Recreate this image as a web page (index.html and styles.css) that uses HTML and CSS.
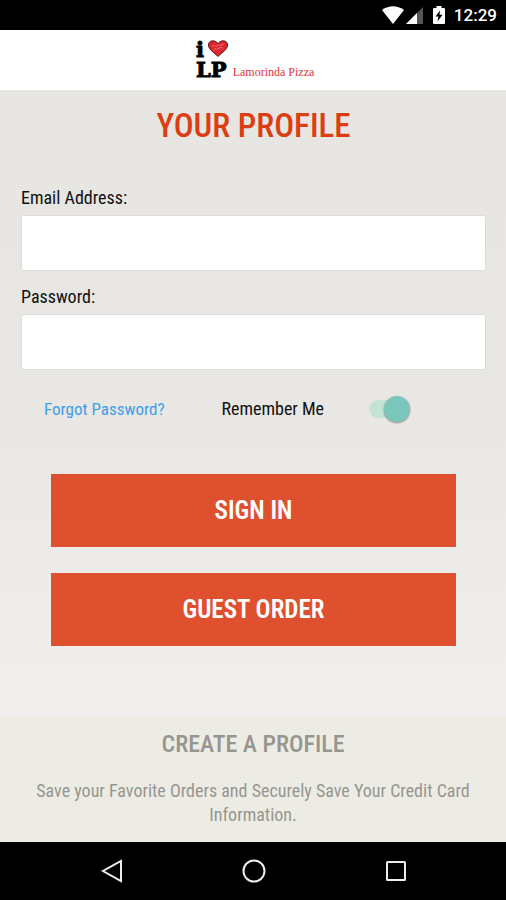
FILE: index.html
```html
<!DOCTYPE html>
<html lang="en">
<head>
<meta charset="utf-8">
<meta name="viewport" content="width=device-width, initial-scale=1">
<title>Lamorinda Pizza</title>
<link rel="stylesheet" href="styles.css">
</head>
<body>
<div class="status">
  <svg width="42" height="20" viewBox="0 0 42 20" aria-hidden="true">
    <path fill="#fff" d="M0 5Q11-2.500 22 5L11 19Z"/>
    <path fill="#555" d="M41 2V19H24Z"/>
    <path fill="#fff" d="M35 8V19H24Z"/>
  </svg>
  <svg width="12" height="20" viewBox="0 0 12 20" aria-hidden="true">
    <path fill="#fff" d="M3.500 1H8.500V3H11Q12 3 12 4V18Q12 19 11 19H1Q0 19 0 18V4Q0 3 1 3H3.500Z"/>
    <path d="M7 5.500 2.500 11.500H5.500L4.500 16.500 9.500 9.800H6.500Z"/>
  </svg>
  <span class="clock">12:29</span>
</div>
<header class="brand">
  <svg class="mark" width="32" height="40" viewBox="0 0 32 40" aria-hidden="true">
    <text class="mark-text" x="0" y="18">i</text>
    <text class="mark-text" x="0" y="38">LP</text>
    <path fill="#df252d" stroke="#481416" d="M22 17.500C19 14 12.500 11 12.500 6C12.500 1 19 .5 22 4.500C25 .5 31.500 1 31.500 6C31.500 11 25 14 22 17.500Z"/>
    <path fill="none" stroke="#f0807c" stroke-width=".8" d="M16 7.500l3-1 1 1 3-2 1 1 4-1.500M17 11l3-1.500 1 1 3-2 3 .5"/>
  </svg>
  <span class="brand-name">Lamorinda Pizza</span>
</header>
<main class="main">
  <h1 class="title">YOUR PROFILE</h1>
  <form class="form">
    <label class="label" for="email">Email Address:</label>
    <input class="field" id="email" type="email">
    <label class="label" for="password">Password:</label>
    <input class="field" id="password" type="password">
    <div class="options">
      <a class="forgot" href="#">Forgot Password?</a>
      <label class="remember" for="remember">Remember Me</label>
      <input class="switch" id="remember" type="checkbox" checked>
    </div>
    <div class="actions">
      <button class="button" type="submit">SIGN IN</button>
      <button class="button" type="button">GUEST ORDER</button>
    </div>
  </form>
</main>
<section class="create">
  <h2 class="create-title"><a href="#">CREATE A PROFILE</a></h2>
  <p class="create-text">Save your Favorite Orders and Securely Save Your Credit Card Information.</p>
</section>
<nav class="nav">
  <button class="nav-button" type="button" aria-label="Back">
    <svg width="24" height="24" viewBox="0 0 24 24"><path d="M21 2V22L3 12Z"/></svg>
  </button>
  <button class="nav-button" type="button" aria-label="Home">
    <svg width="24" height="24" viewBox="0 0 24 24"><circle cx="12" cy="12" r="10.500"/></svg>
  </button>
  <button class="nav-button" type="button" aria-label="Recent apps">
    <svg width="24" height="24" viewBox="0 0 24 24"><rect x="3" y="3" width="18" height="18" rx=".5"/></svg>
  </button>
</nav>
</body>
</html>
```
FILE: styles.css
```css
* {
  box-sizing: border-box;
}

body {
  margin: 0;
  min-height: 100vh;
  display: flex;
  flex-direction: column;
  background: linear-gradient(#e6e5e1 0, #e8e7e3 45%, #efeeed 75%);
  color: #111;
  font-family: "Roboto Condensed", "Liberation Sans Narrow", Roboto, sans-serif;
  font-size: 18px;
  line-height: 24px;
}

.status {
  display: flex;
  justify-content: flex-end;
  align-items: center;
  gap: 9px;
  height: 30px;
  padding-right: 9px;
  background: #000;
  color: #fff;
}

.clock {
  font: 500 17px/24px Roboto, sans-serif;
}

.brand {
  display: flex;
  justify-content: center;
  align-items: flex-end;
  gap: 5px;
  height: 60px;
  padding: 0 0 11px 4px;
  background: #fff;
}

.mark {
  overflow: visible;
}

.mark-text {
  font: 900 21px "DejaVu Serif", serif;
  stroke: #000;
  stroke-width: 1px;
}

.brand-name {
  color: #e0343c;
  font: 12px/14px "Liberation Serif", serif;
}

.main {
  flex: 1;
  padding: 17px 20px 0 21px;
}

.title {
  margin: 0;
  color: #dc3d12;
  font-size: 33px;
  font-weight: 500;
  line-height: 38px;
  text-align: center;
}

.form {
  margin-top: 41px;
}

.label {
  display: block;
  margin-bottom: 5px;
}

.field {
  display: block;
  width: 100%;
  height: 56px;
  margin-bottom: 14px;
  padding: 0 12px;
  border: 1px solid #dddcd8;
  border-radius: 2px;
  background: #fff;
  font: inherit;
}

.options {
  display: flex;
  align-items: center;
  height: 28px;
  margin-top: 25px;
  padding: 0 76px 0 23px;
}

.forgot {
  color: #3e9fec;
  font-size: 17px;
  text-decoration: none;
}

.remember {
  margin: 0 45px 0 auto;
}

.switch {
  appearance: none;
  display: flex;
  align-items: center;
  justify-content: flex-end;
  width: 41px;
  height: 18px;
  margin: 0;
  border-radius: 9px;
  background: #c5e2d7;
}

.switch::before {
  content: "";
  width: 26px;
  height: 26px;
  flex: none;
  border-radius: 50%;
  background: #7bc6bb;
  box-shadow: 0 1px 2px #0006;
}

.actions {
  display: grid;
  gap: 26px;
  margin: 51px 30px 0;
}

.button {
  height: 73px;
  border: 0;
  background: #df502f;
  color: #fff;
  font: 600 25px/32px "Roboto Condensed", "Liberation Sans Narrow", Roboto, sans-serif;
}

.create {
  padding: 13px 30px 15px;
  background: #edece4;
  color: #969691;
  text-align: center;
}

.create-title {
  margin: 0;
  font-size: 24px;
  font-weight: 500;
  line-height: 32px;
}

.create-title a {
  color: inherit;
  text-decoration: none;
}

.create-text {
  margin: 19px 0 0;
}

.nav {
  display: flex;
  justify-content: space-between;
  align-items: center;
  height: 58px;
  padding: 0 98px 0 100px;
  background: #000;
}

.nav-button {
  display: flex;
  padding: 0;
  border: 0;
  background: none;
}

.nav-button svg {
  fill: none;
  stroke: #eee;
  stroke-width: 2;
}
```
